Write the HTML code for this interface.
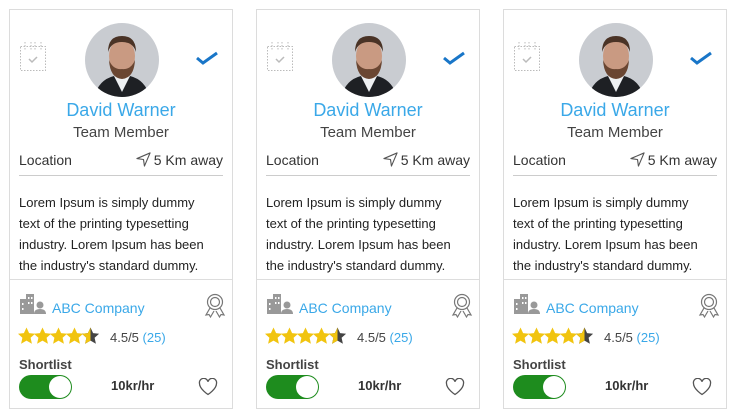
<!DOCTYPE html>
<html><head><meta charset="utf-8"><style>
*{margin:0;padding:0;box-sizing:border-box}
body{width:735px;height:416px;background:#fff;font-family:"Liberation Sans",sans-serif;position:relative;overflow:hidden;color:#333}
.card{position:absolute;top:9px;width:224px;height:400px;border:1px solid #dcdcdc;background:#fff}
.a{position:absolute}
.name{left:0;width:222px;text-align:center;top:90px;font-size:18px;color:#3aa8e8}
.role{left:0;width:222px;text-align:center;top:114px;font-size:15px;color:#444}
.loc{left:9px;top:142px;font-size:14px;color:#333}
.km{right:9px;top:142px;font-size:14px;color:#333}
.hr1{left:9px;width:204px;top:165px;border-top:1px solid #ccc}
.txt{left:9px;top:182px;width:215px;font-size:13px;line-height:21px;color:#222;white-space:nowrap}
.hr2{left:0;width:222px;top:269px;border-top:1px solid #ddd}
.comp{left:42px;top:290px;font-size:14px;color:#3aa8e8}
.rate{left:100px;top:320px;font-size:13px;color:#444}
.rate span{color:#3aa8e8}
.sl{left:9px;top:347px;font-size:13px;font-weight:bold;color:#444}
.tog{left:9px;top:365px;width:53px;height:24px;border-radius:12px;background:#1e8c1e}
.tog::after{content:"";position:absolute;right:1px;top:1px;width:22px;height:22px;border-radius:50%;background:#fff}
.kr{left:101px;top:368px;font-size:13px;font-weight:bold;color:#333}
</style></head><body>
<div id="c"></div>
<script>
var html='';
[9,256,503].forEach(function(x){
html+='<div class="card" style="left:'+x+'px">'+
'<svg class="a" style="left:9px;top:28px" width="28" height="36" viewBox="0 0 28 36"><g fill="none" stroke="#bbb" stroke-dasharray="1.5 1.5"><rect x="1.5" y="8.5" width="25" height="24"/><path d="M6 4v8M12 4v8M16 4v8M22 4v8"/></g><path d="M10 21l3 3 5-5" stroke="#bbb" stroke-width="1.5" fill="none"/></svg>'+
'<svg class="a" style="left:74px;top:12px" width="76" height="76" viewBox="0 0 76 76"><defs><clipPath id="cp'+x+'"><circle cx="38" cy="38" r="37"/></clipPath></defs><g clip-path="url(#cp'+x+')"><rect width="76" height="76" fill="#c9ccd1"/><path d="M10 76 Q14 58 30 54 L46 54 Q62 58 66 76Z" fill="#1e2024"/><path d="M30 54 L38 70 L46 54Z" fill="#eef0f2"/><ellipse cx="38" cy="34" rx="13" ry="17" fill="#c99a82"/><path d="M25 38 Q26 56 38 57 Q50 56 51 38 Q47 48 38 47 Q29 48 25 38Z" fill="#6a4632"/><path d="M24 30 Q24 14 38 14 Q52 14 52 30 Q49 20 38 20 Q27 20 24 30Z" fill="#4a3326"/></g></svg>'+
'<svg class="a" style="left:185px;top:40px" width="24" height="16" viewBox="0 0 24 16"><path d="M2 8l6 5L22 3" stroke="#1976c8" stroke-width="3" fill="none"/></svg>'+
'<div class="a name">David Warner</div><div class="a role">Team Member</div>'+
'<div class="a loc">Location</div>'+
'<div class="a km"><svg width="15" height="15" viewBox="0 0 16 16" style="vertical-align:-2px;margin-right:3px"><path d="M15 1L1 7l7 1 1 7z" fill="none" stroke="#555" stroke-width="1.2" stroke-linejoin="round"/></svg>5 Km away</div>'+
'<div class="a hr1"></div>'+
'<div class="a txt">Lorem Ipsum is simply dummy<br>text of the printing typesetting<br>industry. Lorem Ipsum has been<br>the industry\'s standard dummy.</div>'+
'<div class="a hr2"></div>'+
'<svg class="a" style="left:9px;top:283px" width="28" height="22" viewBox="0 0 28 22"><rect x="1" y="6" width="6" height="15" fill="#999"/><rect x="7" y="1" width="8" height="20" fill="#999"/><g fill="#fff"><rect x="9" y="4" width="1.5" height="2"/><rect x="12" y="4" width="1.5" height="2"/><rect x="9" y="9" width="1.5" height="2"/><rect x="12" y="9" width="1.5" height="2"/><rect x="3" y="10" width="1.5" height="2"/><rect x="3" y="15" width="1.5" height="2"/></g><circle cx="21" cy="12" r="3.5" fill="#999"/><path d="M15 21 Q15 16 21 16 Q27 16 27 21Z" fill="#999"/></svg>'+
'<div class="a comp">ABC Company</div>'+
'<svg class="a" style="left:194px;top:283px" width="22" height="26" viewBox="0 0 22 26"><g fill="none" stroke="#777" stroke-width="1.2"><circle cx="11" cy="9" r="7.5"/><circle cx="11" cy="9" r="4.5"/><path d="M6 15l-4 7 3-.5 1.5 2.5 3.5-6M16 15l4 7-3-.5-1.5 2.5-3.5-6"/></g></svg>'+
'<svg class="a" style="left:8px;top:317px" width="84" height="20" viewBox="0 0 84 20">'+
[0,16,32,48,64].map(function(o,i){return '<path transform="translate('+o+',0)" d="M8.5 .5l2.6 5.6 6 .6-4.5 4 1.3 6-5.4-3.1-5.4 3.1 1.3-6-4.5-4 6-.6z" fill="'+(i==4?'#444':'#f1c40f')+'"/>'}).join('')+
'<path transform="translate(64,0)" d="M8.5 .5l-2.6 5.6-6 .6 4.5 4-1.3 6 5.4-3.1z" fill="#f1c40f"/></svg>'+
'<div class="a rate">4.5/5 <span>(25)</span></div>'+
'<div class="a sl">Shortlist</div><div class="a tog"></div>'+
'<div class="a kr">10kr/hr</div>'+
'<svg class="a" style="left:188px;top:368px" width="20" height="18" viewBox="0 0 20 18"><path d="M10 16.5S1.5 11 1.5 5.5A4 4 0 0 1 10 3.8 4 4 0 0 1 18.5 5.5C18.5 11 10 16.5 10 16.5z" fill="none" stroke="#555" stroke-width="1.3"/></svg>'+
'</div>';
});
document.getElementById('c').innerHTML=html;
</script>
</body></html>
